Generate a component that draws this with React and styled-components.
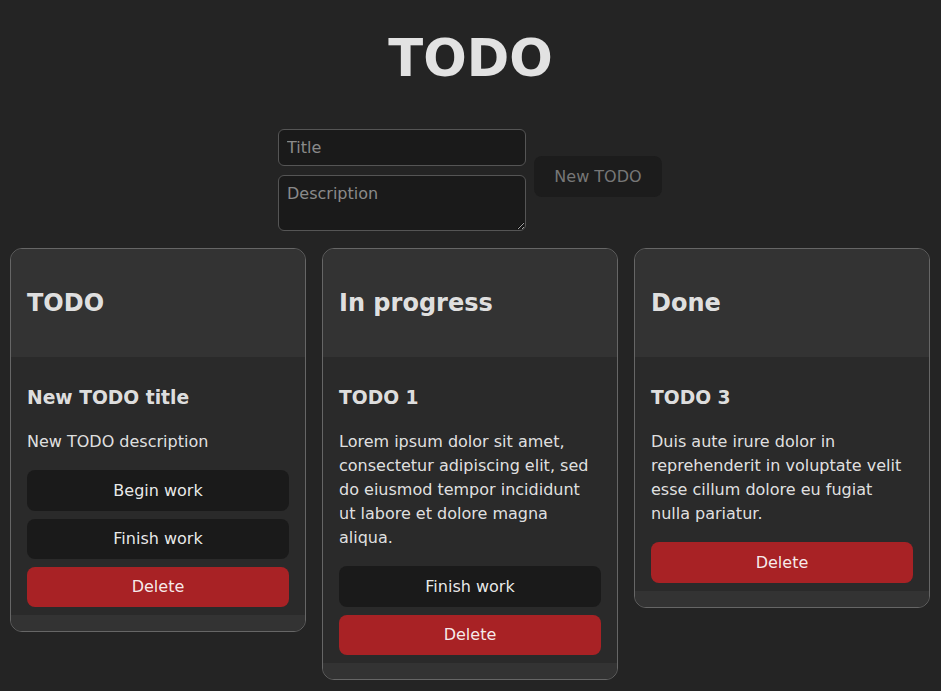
import React from "react";
import styled, { createGlobalStyle } from "styled-components";

const GlobalStyle = createGlobalStyle`
  *, *::before, *::after { box-sizing: border-box; }
  html, body {
    margin: 0;
    padding: 0;
    background: #242424;
    overflow: hidden;
  }
  body {
    font-family: "DejaVu Sans", sans-serif;
    font-size: 16px;
    line-height: 1.5;
    color: rgba(255, 255, 255, 0.87);
  }
`;

const Page = styled.div`
  width: 941px;
  padding: 30px 10px 0;
`;

const Heading = styled.h1`
  margin: 0 0 43px;
  font-size: 51.2px;
  line-height: 1.1;
  font-weight: 700;
  text-align: center;
`;

const Form = styled.form`
  display: flex;
  justify-content: center;
  align-items: center;
  gap: 8px;
  margin: 0 0 17px;
  padding-right: 1px;
`;

const Fields = styled.div`
  display: flex;
  flex-direction: column;
  gap: 9px;
  width: 248px;
`;

const fieldBase = `
  width: 100%;
  margin: 0;
  font-family: "DejaVu Sans", sans-serif;
  font-size: 16px;
  line-height: normal;
  color: rgba(255, 255, 255, 0.87);
  background: #1a1a1a;
  border: 1px solid #555;
  border-radius: 6px;
  padding: 8px 8px;
  outline: none;
  &::placeholder { color: #8a8a8a; }
`;

const TitleInput = styled.input`
  ${fieldBase}
  height: 37px;
`;

const DescInput = styled.textarea`
  ${fieldBase}
  height: 56px;
  resize: vertical;
  display: block;
`;

const Button = styled.button`
  border-radius: 8px;
  border: 1px solid transparent;
  padding: 0.6em 1.2em;
  font-size: 1em;
  font-weight: 500;
  font-family: "DejaVu Sans", sans-serif;
  line-height: normal;
  background-color: ${(p) => (p.$danger ? "#a82225" : "#1a1a1a")};
  color: ${(p) => (p.disabled ? "#777" : "rgba(255,255,255,0.92)")};
  cursor: pointer;
  width: ${(p) => (p.$block ? "100%" : "auto")};
`;

const NewButton = styled(Button)`
  width: 128px;
  height: 41px;
  margin-bottom: 7px;
  background-color: #1c1c1c;
`;

const Board = styled.div`
  display: flex;
  gap: 16px;
  align-items: flex-start;
`;

const Column = styled.section`
  flex: 0 0 296px;
  width: 296px;
  border: 1px solid #666;
  border-radius: 12px;
  overflow: hidden;
  background: #2a2a2a;
`;

const ColumnHeader = styled.header`
  background: #333333;
  padding: 16px;
`;

const ColumnTitle = styled.h2`
  margin: 20px 0;
  font-size: 24px;
  line-height: 36px;
  font-weight: 700;
`;

const ColumnBody = styled.div`
  padding: 8px 16px 8px;
`;

const ColumnFooter = styled.footer`
  height: 16px;
  background: #333333;
`;

const Item = styled.article`
  display: flex;
  flex-direction: column;
`;

const ItemTitle = styled.h3`
  margin: 18.5px 0;
  font-size: 18.72px;
  line-height: 28px;
  font-weight: 700;
`;

const ItemText = styled.p`
  margin: 0 0 16px;
  font-size: 16px;
  line-height: 24px;
`;

const Actions = styled.div`
  display: flex;
  flex-direction: column;
  gap: 8px;
`;

const columns = [
  {
    title: "TODO",
    items: [
      {
        title: "New TODO title",
        text: "New TODO description",
        actions: ["Begin work", "Finish work"],
      },
    ],
  },
  {
    title: "In progress",
    items: [
      {
        title: "TODO 1",
        text:
          "Lorem ipsum dolor sit amet, consectetur adipiscing elit, sed do eiusmod tempor incididunt ut labore et dolore magna aliqua.",
        actions: ["Finish work"],
      },
    ],
  },
  {
    title: "Done",
    items: [
      {
        title: "TODO 3",
        text:
          "Duis aute irure dolor in reprehenderit in voluptate velit esse cillum dolore eu fugiat nulla pariatur.",
        actions: [],
      },
    ],
  },
];

export default function App() {
  return (
    <>
      <GlobalStyle />
      <Page>
        <Heading>TODO</Heading>
        <Form onSubmit={(e) => e.preventDefault()}>
          <Fields>
            <TitleInput placeholder="Title" />
            <DescInput placeholder="Description" />
          </Fields>
          <NewButton type="submit" disabled>
            New TODO
          </NewButton>
        </Form>
        <Board>
          {columns.map((col) => (
            <Column key={col.title}>
              <ColumnHeader>
                <ColumnTitle>{col.title}</ColumnTitle>
              </ColumnHeader>
              <ColumnBody>
                {col.items.map((item) => (
                  <Item key={item.title}>
                    <ItemTitle>{item.title}</ItemTitle>
                    <ItemText>{item.text}</ItemText>
                    <Actions>
                      {item.actions.map((a) => (
                        <Button key={a} $block type="button">
                          {a}
                        </Button>
                      ))}
                      <Button $block $danger type="button">
                        Delete
                      </Button>
                    </Actions>
                  </Item>
                ))}
              </ColumnBody>
              <ColumnFooter />
            </Column>
          ))}
        </Board>
      </Page>
    </>
  );
}
